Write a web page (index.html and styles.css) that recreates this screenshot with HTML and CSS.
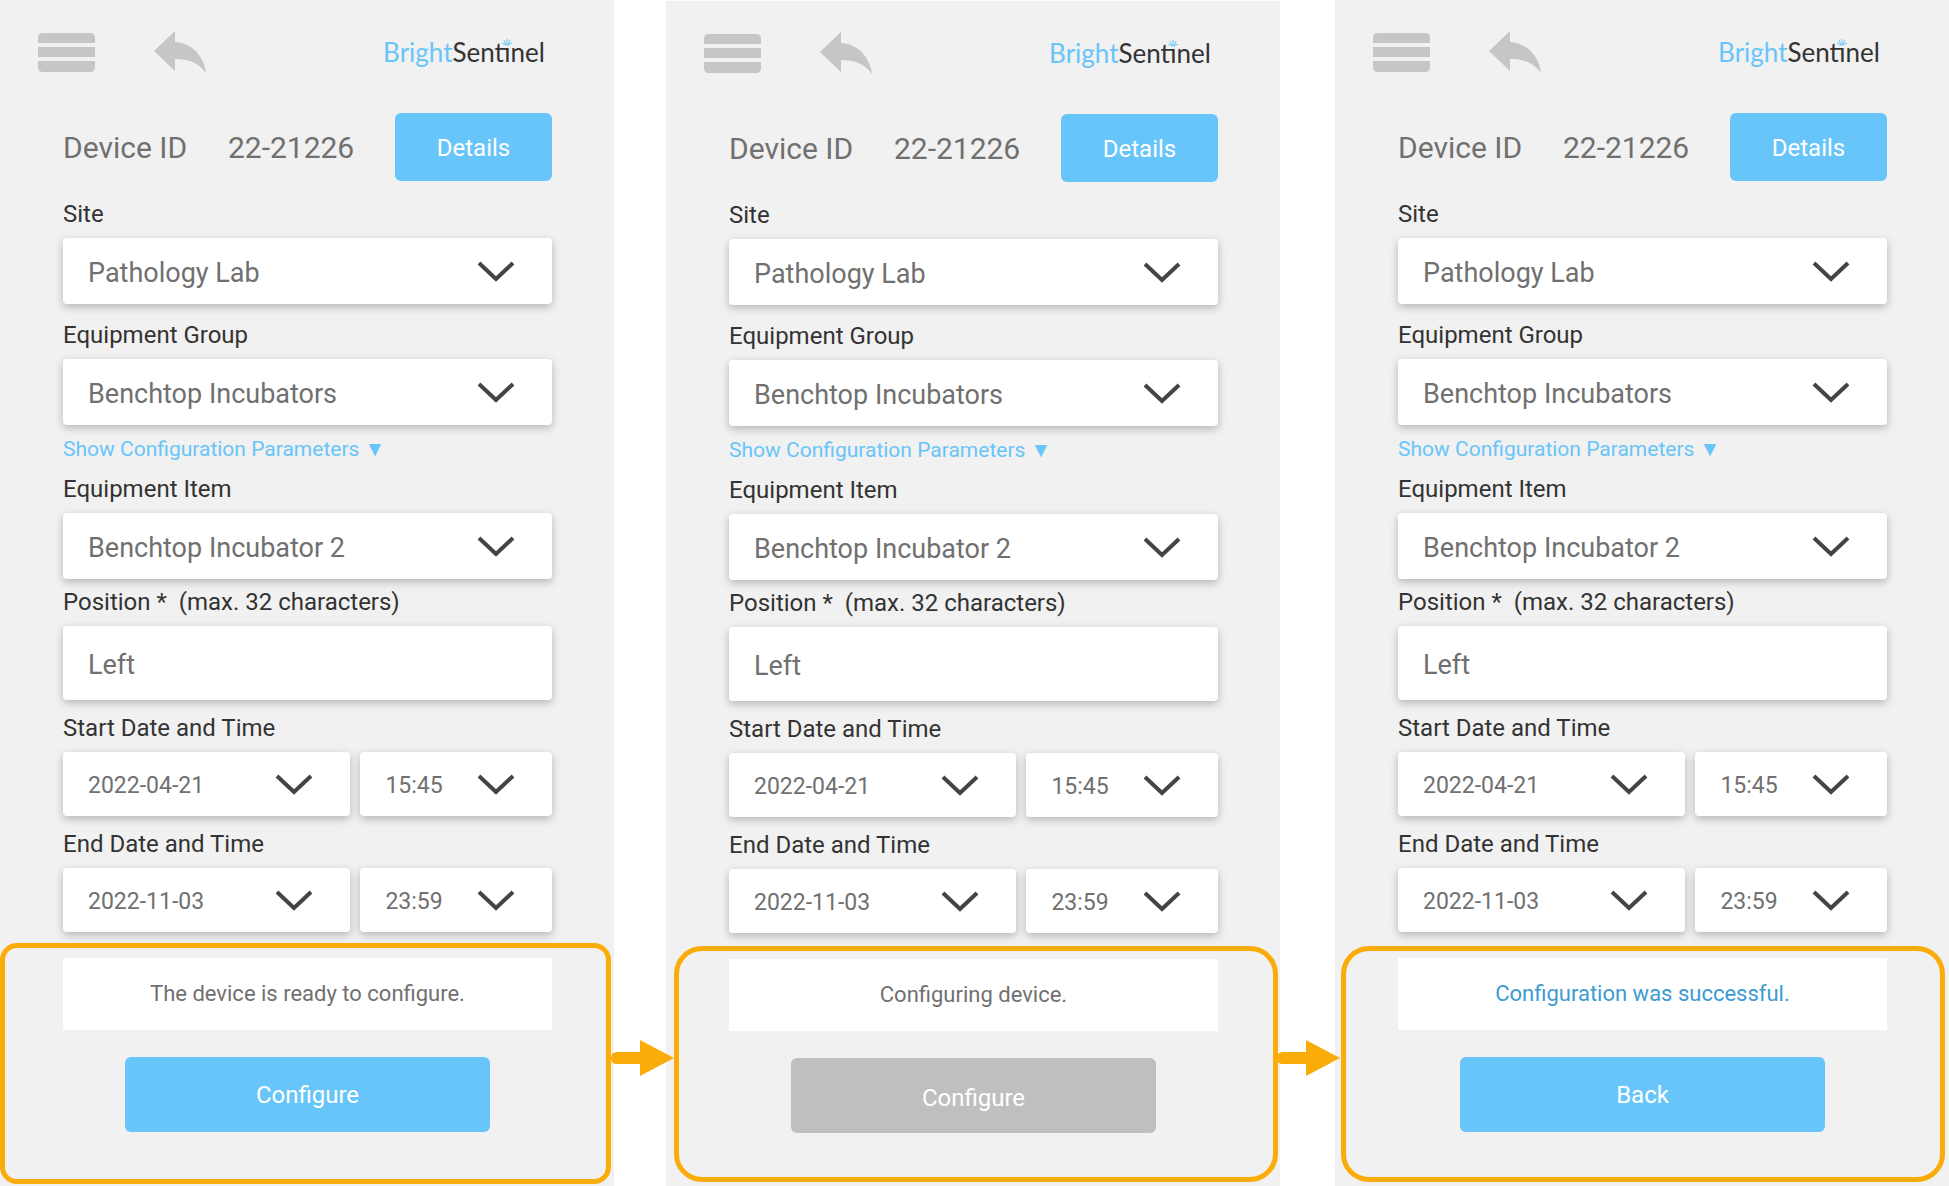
FILE: index.html
```
<!DOCTYPE html>
<html lang="en">
<head>
    <meta charset="UTF-8">
    <meta name="viewport" content="width=device-width, initial-scale=1.0">
    <title>BrightSentinel - Configure Device</title>
    <link rel="stylesheet" href="styles.css">
</head>
<body>
    <!-- shared icons -->
    <svg class="icon-defs" width="0" height="0" aria-hidden="true">
        <symbol id="icon-menu" viewBox="0 0 57 39">
            <path d="M5 0H52Q57 0 57 5V10H0V5Q0 0 5 0ZM0 14H57V24H0ZM0 28H57V34Q57 39 52 39H5Q0 39 0 34Z"/>
        </symbol>
        <symbol id="icon-back" viewBox="0 0 52 42">
            <path d="M0 20L21 0V11C38 12 50 25 52 42C44 31 34 28 21 28V40Z"/>
        </symbol>
        <symbol id="icon-chevron" viewBox="0 0 38 21">
            <path d="M2 2L19 18L36 2" fill="none" stroke="#444" stroke-width="4"/>
        </symbol>
        <symbol id="icon-spark" viewBox="0 0 10 7">
            <path d="M5 7V0M4 6L2 1M6 6L8 1M4 6L0 4M6 6L10 4" fill="none" stroke="#68c5f9" stroke-width="1"/>
        </symbol>
        <symbol id="icon-arrow" viewBox="0 0 63 36">
            <path d="M6 12H29V0L63 18L29 36V24H6Q0 24 0 18Q0 12 6 12Z"/>
        </symbol>
    </svg>

    <main class="flow">
        <section class="panel panel-ready">
            <header class="topbar">
                <button type="button" class="icon-button" aria-label="Menu"><svg class="icon-menu"><use href="#icon-menu"/></svg></button>
                <button type="button" class="icon-button" aria-label="Go back"><svg class="icon-back"><use href="#icon-back"/></svg></button>
                <div class="logo"><span class="logo-bright">Bright</span>Sentinel<svg class="icon-spark"><use href="#icon-spark"/></svg></div>
            </header>
            <form class="config-form">
                <div class="device-row">
                    <span class="device-label">Device ID</span>
                    <span class="device-id">22-21226</span>
                    <button type="button" class="details-button">Details</button>
                </div>

                <label class="field-label label-site" for="site1">Site</label>
                <div class="select-box">
                    <select id="site1"><option>Pathology Lab</option></select>
                    <svg class="icon-chevron"><use href="#icon-chevron"/></svg>
                </div>

                <label class="field-label label-group" for="group1">Equipment Group</label>
                <div class="select-box">
                    <select id="group1"><option>Benchtop Incubators</option></select>
                    <svg class="icon-chevron"><use href="#icon-chevron"/></svg>
                </div>
                <a class="params-link" href="#">Show Configuration Parameters ▼</a>

                <label class="field-label label-item" for="item1">Equipment Item</label>
                <div class="select-box">
                    <select id="item1"><option>Benchtop Incubator 2</option></select>
                    <svg class="icon-chevron"><use href="#icon-chevron"/></svg>
                </div>

                <label class="field-label label-position" for="position1">Position * &nbsp;(max. 32 characters)</label>
                <input type="text" class="text-box" id="position1" maxlength="32" value="Left">

                <label class="field-label label-date" for="startDate1">Start Date and Time</label>
                <div class="date-row">
                    <div class="select-box select-small">
                        <select id="startDate1"><option>2022-04-21</option></select>
                        <svg class="icon-chevron"><use href="#icon-chevron"/></svg>
                    </div>
                    <div class="select-box select-small">
                        <select id="startTime1" aria-label="Start time"><option>15:45</option></select>
                        <svg class="icon-chevron"><use href="#icon-chevron"/></svg>
                    </div>
                </div>

                <label class="field-label label-date" for="endDate1">End Date and Time</label>
                <div class="date-row">
                    <div class="select-box select-small">
                        <select id="endDate1"><option>2022-11-03</option></select>
                        <svg class="icon-chevron"><use href="#icon-chevron"/></svg>
                    </div>
                    <div class="select-box select-small">
                        <select id="endTime1" aria-label="End time"><option>23:59</option></select>
                        <svg class="icon-chevron"><use href="#icon-chevron"/></svg>
                    </div>
                </div>
            </form>
            <div class="result">
                <p class="status">The device is ready to configure.</p>
                <button type="button" class="action-button">Configure</button>
            </div>
        </section>

        <div class="step-arrow"><svg><use href="#icon-arrow"/></svg></div>

        <section class="panel panel-busy">
            <header class="topbar">
                <button type="button" class="icon-button" aria-label="Menu"><svg class="icon-menu"><use href="#icon-menu"/></svg></button>
                <button type="button" class="icon-button" aria-label="Go back"><svg class="icon-back"><use href="#icon-back"/></svg></button>
                <div class="logo"><span class="logo-bright">Bright</span>Sentinel<svg class="icon-spark"><use href="#icon-spark"/></svg></div>
            </header>
            <form class="config-form">
                <div class="device-row">
                    <span class="device-label">Device ID</span>
                    <span class="device-id">22-21226</span>
                    <button type="button" class="details-button">Details</button>
                </div>

                <label class="field-label label-site" for="site2">Site</label>
                <div class="select-box">
                    <select id="site2"><option>Pathology Lab</option></select>
                    <svg class="icon-chevron"><use href="#icon-chevron"/></svg>
                </div>

                <label class="field-label label-group" for="group2">Equipment Group</label>
                <div class="select-box">
                    <select id="group2"><option>Benchtop Incubators</option></select>
                    <svg class="icon-chevron"><use href="#icon-chevron"/></svg>
                </div>
                <a class="params-link" href="#">Show Configuration Parameters ▼</a>

                <label class="field-label label-item" for="item2">Equipment Item</label>
                <div class="select-box">
                    <select id="item2"><option>Benchtop Incubator 2</option></select>
                    <svg class="icon-chevron"><use href="#icon-chevron"/></svg>
                </div>

                <label class="field-label label-position" for="position2">Position * &nbsp;(max. 32 characters)</label>
                <input type="text" class="text-box" id="position2" maxlength="32" value="Left">

                <label class="field-label label-date" for="startDate2">Start Date and Time</label>
                <div class="date-row">
                    <div class="select-box select-small">
                        <select id="startDate2"><option>2022-04-21</option></select>
                        <svg class="icon-chevron"><use href="#icon-chevron"/></svg>
                    </div>
                    <div class="select-box select-small">
                        <select id="startTime2" aria-label="Start time"><option>15:45</option></select>
                        <svg class="icon-chevron"><use href="#icon-chevron"/></svg>
                    </div>
                </div>

                <label class="field-label label-date" for="endDate2">End Date and Time</label>
                <div class="date-row">
                    <div class="select-box select-small">
                        <select id="endDate2"><option>2022-11-03</option></select>
                        <svg class="icon-chevron"><use href="#icon-chevron"/></svg>
                    </div>
                    <div class="select-box select-small">
                        <select id="endTime2" aria-label="End time"><option>23:59</option></select>
                        <svg class="icon-chevron"><use href="#icon-chevron"/></svg>
                    </div>
                </div>
            </form>
            <div class="result">
                <p class="status">Configuring device.</p>
                <button type="button" class="action-button" disabled>Configure</button>
            </div>
        </section>

        <div class="step-arrow"><svg><use href="#icon-arrow"/></svg></div>

        <section class="panel panel-done">
            <header class="topbar">
                <button type="button" class="icon-button" aria-label="Menu"><svg class="icon-menu"><use href="#icon-menu"/></svg></button>
                <button type="button" class="icon-button" aria-label="Go back"><svg class="icon-back"><use href="#icon-back"/></svg></button>
                <div class="logo"><span class="logo-bright">Bright</span>Sentinel<svg class="icon-spark"><use href="#icon-spark"/></svg></div>
            </header>
            <form class="config-form">
                <div class="device-row">
                    <span class="device-label">Device ID</span>
                    <span class="device-id">22-21226</span>
                    <button type="button" class="details-button">Details</button>
                </div>

                <label class="field-label label-site" for="site3">Site</label>
                <div class="select-box">
                    <select id="site3"><option>Pathology Lab</option></select>
                    <svg class="icon-chevron"><use href="#icon-chevron"/></svg>
                </div>

                <label class="field-label label-group" for="group3">Equipment Group</label>
                <div class="select-box">
                    <select id="group3"><option>Benchtop Incubators</option></select>
                    <svg class="icon-chevron"><use href="#icon-chevron"/></svg>
                </div>
                <a class="params-link" href="#">Show Configuration Parameters ▼</a>

                <label class="field-label label-item" for="item3">Equipment Item</label>
                <div class="select-box">
                    <select id="item3"><option>Benchtop Incubator 2</option></select>
                    <svg class="icon-chevron"><use href="#icon-chevron"/></svg>
                </div>

                <label class="field-label label-position" for="position3">Position * &nbsp;(max. 32 characters)</label>
                <input type="text" class="text-box" id="position3" maxlength="32" value="Left">

                <label class="field-label label-date" for="startDate3">Start Date and Time</label>
                <div class="date-row">
                    <div class="select-box select-small">
                        <select id="startDate3"><option>2022-04-21</option></select>
                        <svg class="icon-chevron"><use href="#icon-chevron"/></svg>
                    </div>
                    <div class="select-box select-small">
                        <select id="startTime3" aria-label="Start time"><option>15:45</option></select>
                        <svg class="icon-chevron"><use href="#icon-chevron"/></svg>
                    </div>
                </div>

                <label class="field-label label-date" for="endDate3">End Date and Time</label>
                <div class="date-row">
                    <div class="select-box select-small">
                        <select id="endDate3"><option>2022-11-03</option></select>
                        <svg class="icon-chevron"><use href="#icon-chevron"/></svg>
                    </div>
                    <div class="select-box select-small">
                        <select id="endTime3" aria-label="End time"><option>23:59</option></select>
                        <svg class="icon-chevron"><use href="#icon-chevron"/></svg>
                    </div>
                </div>
            </form>
            <div class="result">
                <p class="status status-success">Configuration was successful.</p>
                <button type="button" class="action-button">Back</button>
            </div>
        </section>
    </main>
</body>
</html>
```
FILE: styles.css
```
* {
    box-sizing: border-box;
}

body {
    margin: 0;
    background-color: #fff;
    font-family: Roboto, "Liberation Sans", sans-serif;
    color: #333;
}

button, input, select {
    font-family: inherit;
    margin: 0;
    border: none;
}

button {
    padding: 0;
    cursor: pointer;
}

svg {
    display: block;
}

.icon-defs {
    position: absolute;
}

.flow {
    display: grid;
    grid-template-columns: 1fr 52px 1fr 55px 1fr;
    min-height: 100vh;
}

.panel {
    min-width: 0;
    background-color: #f1f1f1;
}

.panel-busy {
    margin-top: 1px;
}

/* header */
.topbar {
    display: flex;
    align-items: center;
    padding: 31px 69px 0 38px;
}

.icon-button {
    margin-right: 59px;
    background: none;
    fill: #c6c6c6;
}

.icon-menu {
    width: 57px;
    height: 39px;
}

.icon-back {
    width: 52px;
    height: 42px;
}

.logo {
    position: relative;
    margin-left: auto;
    font-family: Lato, sans-serif;
    font-size: 26px;
    line-height: 42px;
    color: #333;
}

.logo-bright {
    color: #68c5f9;
}

/* sits over the dot of the second "i" */
.icon-spark {
    position: absolute;
    top: 8px;
    right: 33px;
    width: 10px;
    height: 7px;
    background-color: #f1f1f1;
}

/* form */
.config-form {
    padding: 40px 62px 0 63px;
}

.device-row {
    display: flex;
    align-items: center;
    justify-content: space-between;
    font-size: 30px;
    color: #707070;
}

.details-button {
    width: 157px;
    height: 68px;
    padding-top: 2px;
    border-radius: 6px;
    background-color: #68c5f9;
    color: #fff;
    font-size: 24px;
}

.field-label {
    display: block;
    margin-bottom: 10px;
    font-size: 24px;
    line-height: 28px;
}

.label-site {
    margin-top: 19px;
}

.label-group {
    margin-top: 17px;
}

.label-item {
    margin-top: 12px;
}

.label-position {
    margin-top: 9px;
}

.label-date {
    margin-top: 14px;
}

.select-box {
    position: relative;
}

.select-box select,
.text-box {
    display: block;
    width: 100%;
    height: 66px;
    padding: 3px 25px 0;
    border-radius: 4px;
    background-color: #fff;
    box-shadow: 0 3px 8px rgba(0, 0, 0, 0.25);
    color: #707070;
    font-size: 27px;
    appearance: none;
}

.text-box {
    height: 74px;
}

.select-small select {
    height: 64px;
    font-size: 23px;
}

.icon-chevron {
    position: absolute;
    top: 50%;
    right: 37px;
    width: 38px;
    height: 21px;
    margin-top: -10px;
    pointer-events: none;
}

.date-row {
    display: grid;
    grid-template-columns: 3fr 2fr;
    gap: 10px;
}

.params-link {
    display: block;
    margin-top: 10px;
    color: #68c5f9;
    font-size: 21px;
    line-height: 28px;
    text-decoration: none;
}

/* result area with the orange highlight */
.result {
    position: relative;
    padding: 26px 62px 53px 63px;
}

.result::after {
    content: "";
    position: absolute;
    inset: 13px 2px 4px 8px;
    border: 5px solid #f9ac0a;
    border-radius: 28px;
    pointer-events: none;
}

.panel-ready .result::after {
    inset: 11px 3px 1px 0;
    border-radius: 17px;
}

.panel-done .result::after {
    inset: 14px 4px 3px 6px;
}

.status {
    margin: 0 0 27px;
    padding: 0 20px;
    background-color: #fff;
    color: #707070;
    font-size: 22px;
    line-height: 72px;
    text-align: center;
}

.status-success {
    color: #3d9bd3;
}

.action-button {
    display: block;
    width: calc(100% - 124px);
    height: 75px;
    margin: 0 auto;
    border-radius: 6px;
    background-color: #68c5f9;
    color: #fff;
    font-size: 24px;
}

.action-button:disabled {
    padding-top: 5px;
    background-color: #bfbfbf;
    cursor: default;
}

/* arrows between the steps */
.step-arrow {
    position: relative;
}

.step-arrow svg {
    position: absolute;
    bottom: 110px;
    left: -3px;
    width: 63px;
    height: 36px;
    fill: #f9ac0a;
}
```
